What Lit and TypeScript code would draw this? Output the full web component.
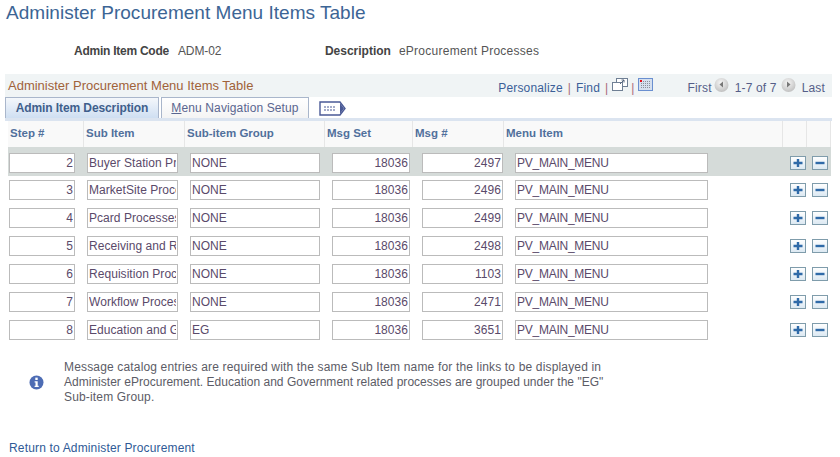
import { LitElement, html, css, svg } from 'lit';
import { customElement } from 'lit/decorators.js';

const rows = [
  { step: 2, sub: 'Buyer Station Processes', group: 'NONE', set: 18036, msg: 2497 },
  { step: 3, sub: 'MarketSite Processes', group: 'NONE', set: 18036, msg: 2496 },
  { step: 4, sub: 'Pcard Processes', group: 'NONE', set: 18036, msg: 2499 },
  { step: 5, sub: 'Receiving and Returns', group: 'NONE', set: 18036, msg: 2498 },
  { step: 6, sub: 'Requisition Processes', group: 'NONE', set: 18036, msg: 1103 },
  { step: 7, sub: 'Workflow Processes', group: 'NONE', set: 18036, msg: 2471 },
  { step: 8, sub: 'Education and Government', group: 'EG', set: 18036, msg: 3651 },
];

const headers = ['Step #', 'Sub Item', 'Sub-item Group', 'Msg Set', 'Msg #', 'Menu Item', '', ''];

const addIcon = svg`<rect x="0.5" y="0.5" width="15" height="13" fill="url(#btn)" stroke="#7f9cab"/><path d="M3.5 7h9M8 3v8" stroke="#2f6aa8" stroke-width="2.4" fill="none"/>`;
const removeIcon = svg`<rect x="0.5" y="0.5" width="15" height="13" fill="url(#btn)" stroke="#7f9cab"/><path d="M3.5 7h9" stroke="#2f6aa8" stroke-width="2.4" fill="none"/>`;

@customElement('app-root')
export class AppRoot extends LitElement {
  static styles = css`
    :host {
      display: block;
      width: 840px;
      height: 457px;
      overflow: hidden;
      background: #fff;
      font-family: 'Liberation Sans', Arial, sans-serif;
      font-size: 12px;
      letter-spacing: 0.16px;
      color: #555;
    }
    h1 {
      margin: 0;
      padding: 2px 0 0 6px;
      height: 25px;
      font-size: 19px;
      line-height: 22px;
      letter-spacing: 0.02px;
      font-weight: normal;
      color: #3c6595;
    }
    .keys {
      display: flex;
      height: 47px;
      align-items: center;
      padding-left: 74px;
      box-sizing: border-box;
      letter-spacing: 0;
    }
    .keys b { color: #444; margin-right: 9px; letter-spacing: -0.25px; }
    .keys b.desc { margin-right: 8px; letter-spacing: 0; }
    .keys span { width: 147px; letter-spacing: -0.1px; }
    .keys em { font-style: normal; letter-spacing: 0.25px; }
    .band {
      display: flex;
      align-items: center;
      margin: 0 8px 0 5px;
      height: 23px;
      background: #f0f4f5;
      padding-left: 3px;
      color: #a0623a;
    }
    .band .title { flex: 1; line-height: 23px; font-size: 13px; letter-spacing: 0; }
    .nav { display: flex; align-items: center; color: #555e88; padding-top: 5px; }
    .nav a { color: #3b5f98; }
    .nav i { font-style: normal; color: #a86a7a; margin: 0 5px; }
    .nav i.tight { margin-right: 4px; }
    .nav i.narrow { margin: 0 4px 0 3px; }
    .nav svg { display: block; margin-top: -7px; }
    .nav svg.grid-icon { margin-left: -1px; }
    .pager { display: flex; align-items: center; margin: 0 7px 0 35px; }
    .pager svg { margin: -7px 6px 0 2px; }
    .pager svg.next { margin-left: 4px; }
    .tabs { display: flex; height: 21px; margin-left: 5px; align-items: flex-end; }
    .tab {
      box-sizing: border-box;
      height: 21px;
      line-height: 21px;
      text-align: center;
      border: 1px solid #a9b6cb;
      border-bottom: 0;
    }
    .tab.on {
      width: 154px;
      font-weight: bold;
      letter-spacing: -0.1px;
      color: #3f5f8c;
      background: linear-gradient(#f4f7fb, #cfdff2);
    }
    .tab.off {
      width: 148px;
      margin-left: 2px;
      color: #5a6690;
      letter-spacing: 0.12px;
      background: linear-gradient(#fff, #f4f4f4);
    }
    .tab u { text-decoration: underline; }
    .tabs svg { margin: 0 0 2px 10px; }
    .rule { height: 3px; margin: 0 8px 0 5px; background: #dbe4f0; }
    .grid {
      display: grid;
      grid-template-columns: 76px 101px 140px 88px 91px 279px 24px 24px;
      margin-left: 8px;
    }
    .head {
      height: 26px;
      line-height: 24px;
      padding-left: 2px;
      background: #f9f9f9;
      border-right: 1px solid #e6e6e6;
      box-sizing: border-box;
      font-size: 11.5px;
      letter-spacing: 0;
      font-weight: bold;
      color: #51709c;
    }
    .row { display: contents; }
    .cell {
      height: 28px;
      display: flex;
      align-items: center;
      box-sizing: border-box;
    }
    .row.first .cell { background: #d5dbd9; height: 29px; padding-top: 2px; margin-bottom: -1px; }
    .row.first + .row .cell { margin-top: 1px; }
    input {
      box-sizing: border-box;
      height: 20px;
      padding: 0 1px 0 1px;
      border: 1px solid #bbb;
      background: #fff;
      font: 12px 'Liberation Sans', Arial, sans-serif;
      letter-spacing: 0.05px;
      color: #5a4a6a;
      outline: none;
    }
    input.num { text-align: right; }
    .step { padding-left: 1px; }
    .step input { width: 66px; }
    .sub { padding-left: 3px; }
    .sub input { width: 91px; }
    .grp { padding-left: 5px; }
    .grp input { width: 130px; }
    .set { padding-left: 7px; }
    .set input { width: 78px; }
    .msg { padding-left: 9px; }
    .msg input { width: 81px; }
    .menu { padding-left: 11px; }
    .menu input { width: 193px; letter-spacing: -0.25px; }
    .act { padding-left: 7px; }
    .act.minus { padding-left: 5px; }
    .note {
      display: flex;
      align-items: center;
      margin-top: 16px;
      padding-left: 29px;
      line-height: 15px;
    }
    .note svg { flex: none; margin-right: 20px; }
    .note p { margin: 0; color: #5c5c66; }
    .note span { display: block; white-space: nowrap; }
    .note span.plain { letter-spacing: 0.02px; }
    .back {
      display: block;
      margin: 36px 0 0 9px;
      line-height: 15px;
      color: #2f5a96;
    }
  `;

  render() {
    return html`
      <svg width="0" height="0" style="position:absolute">
        <defs>
          <linearGradient id="btn" x1="0" y1="0" x2="0" y2="1">
            <stop offset="0" stop-color="#ffffff" />
            <stop offset="1" stop-color="#dbe8f2" />
          </linearGradient>
          <radialGradient id="round" cx="0.45" cy="0.35" r="0.7">
            <stop offset="0" stop-color="#f6f6f6" />
            <stop offset="1" stop-color="#bdbdbd" />
          </radialGradient>
        </defs>
      </svg>
      <h1>Administer Procurement Menu Items Table</h1>
      <div class="keys">
        <b>Admin Item Code</b><span>ADM-02</span>
        <b class="desc">Description</b><em>eProcurement Processes</em>
      </div>
      <div class="band">
        <div class="title">Administer Procurement Menu Items Table</div>
        <div class="nav">
          <a>Personalize</a><i>|</i><a>Find</a><i class="tight">|</i>
          <svg width="16" height="14" viewBox="0 0 16 14">
            <rect x="4.5" y="0.5" width="11" height="8" fill="#fff" stroke="#6f7f94" />
            <rect x="0.5" y="4.5" width="10" height="8" fill="#fff" stroke="#6f7f94" />
            <path d="M8 6l4-4M9.5 2H12v2.5" stroke="#55657c" fill="none" />
          </svg>
          <i class="narrow">|</i>
          <svg class="grid-icon" width="15" height="14" viewBox="0 0 15 14">
            <rect x="0.5" y="0.5" width="14" height="12" fill="#d5dfee" stroke="#6a8fd0" />
            <path d="M3 3.5h10M3 5.5h10M3 7.5h10M3 9.5h10" stroke="#8a8f9a" stroke-dasharray="1 1" fill="none" />
            <rect x="2" y="2" width="2" height="2" fill="#e8101c" />
          </svg>
          <div class="pager">
            First
            <svg width="15" height="16" viewBox="0 0 15 16">
              <circle cx="7.5" cy="8" r="7" fill="url(#round)" />
              <path d="M9 4.5v6l-3.5-3z" fill="#777" />
            </svg>
            <span>1-7 of 7</span>
            <svg class="next" width="15" height="16" viewBox="0 0 15 16">
              <circle cx="7.5" cy="8" r="7" fill="url(#round)" />
              <path d="M6 4.5v6l3.5-3z" fill="#777" />
            </svg>
            Last
          </div>
        </div>
      </div>
      <div class="tabs">
        <div class="tab on">Admin Item Description</div>
        <div class="tab off"><u>M</u>enu Navigation Setup</div>
        <svg width="27" height="15" viewBox="0 0 27 15">
          <path d="M1 1h20l5 6.5-5 6.5H1z" fill="#fff" stroke="#4a5a96" stroke-width="1.4" />
          <path d="M5 6h11M5 9h11" stroke="#4a5a96" stroke-dasharray="2 1" />
          <path d="M21 2l4 5.5-4 5.5z" fill="#4a5a96" />
        </svg>
      </div>
      <div class="rule"></div>
      <div class="grid">
        ${headers.map(h => html`<div class="head">${h}</div>`)}
        ${rows.map(
          (r, i) => html`
            <div class="row ${i === 0 ? 'first' : ''}">
              <div class="cell step"><input class="num" readonly .value=${String(r.step)} /></div>
              <div class="cell sub"><input readonly .value=${r.sub} /></div>
              <div class="cell grp"><input readonly .value=${r.group} /></div>
              <div class="cell set"><input class="num" readonly .value=${String(r.set)} /></div>
              <div class="cell msg"><input class="num" readonly .value=${String(r.msg)} /></div>
              <div class="cell menu"><input readonly value="PV_MAIN_MENU" /></div>
              <div class="cell act"><svg width="16" height="14" viewBox="0 0 16 14">${addIcon}</svg></div>
              <div class="cell act minus"><svg width="16" height="14" viewBox="0 0 16 14">${removeIcon}</svg></div>
            </div>
          `
        )}
      </div>
      <div class="note">
        <svg width="15" height="15" viewBox="0 0 15 15">
          <circle cx="7.5" cy="7.5" r="7" fill="#4d6cb4" />
          <rect x="6.3" y="2.6" width="2.4" height="2.4" fill="#fff" />
          <path d="M5.6 6.2h3.1v4.6h1v1.3H5.6v-1.3h.9V7.5h-.9z" fill="#fff" />
        </svg>
        <p>
          <span>Message catalog entries are required with the same Sub Item name for the links to be displayed in</span>
          <span class="plain">Administer eProcurement. Education and Government related processes are grouped under the "EG"</span>
          <span>Sub-item Group.</span>
        </p>
      </div>
      <a class="back">Return to Administer Procurement</a>
    `;
  }
}
